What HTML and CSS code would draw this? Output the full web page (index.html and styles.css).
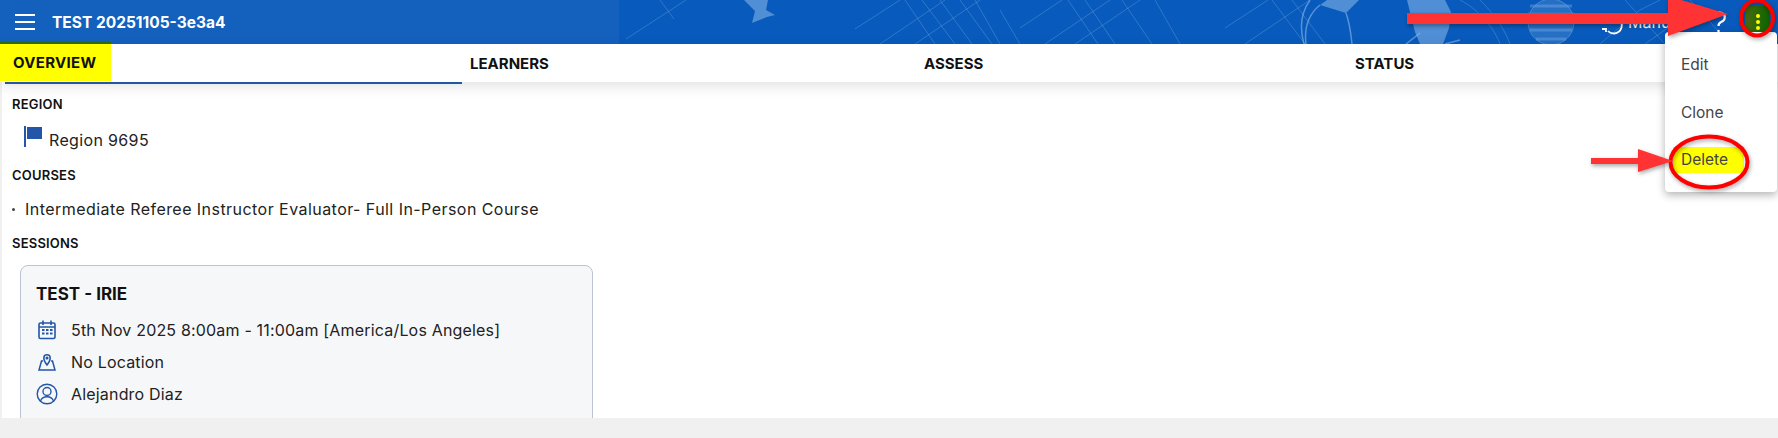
FILE: index.html
```html
<!DOCTYPE html>
<html lang="en">
<head>
	<meta charset="UTF-8">
	<title>TEST 20251105-3e3a4</title>
	<link rel="stylesheet" href="styles.css">
</head>
<body>
	<header class="topbar">
		<div class="topbar-side"></div>
		<svg class="topbar-art" width="1778" height="44" viewBox="0 0 1778 44" fill="none" stroke="#8db8ea">
			<g stroke-opacity="0.3">
				<path d="M626 39L686 0M660 0L674 19" />
				<path d="M855 29L900 0M880 44L945 0M915 44L980 0M905 0L935 44M922 0L955 44M940 0L972 44M960 0L992 44M975 0L1000 44" />
				<path d="M1020 28L1062 0M1045 44L1110 0M1075 44L1140 0M1000 10L1020 44M1068 0L1098 44M1085 0L1115 44M1122 0L1152 44M1155 0L1180 44" />
				<path d="M1225 28L1268 0M1245 44L1310 0M1272 0L1305 44M1292 0L1325 44" />
				<path d="M1460 0C1480 10 1495 30 1500 44M1480 0C1495 15 1505 30 1510 44M1600 44L1640 10L1660 0M1645 44L1700 5M1625 0L1665 44M1690 0L1730 44" />
			</g>
			<g fill="#8db8ea" fill-opacity="0.55" stroke="none">
				<path d="M744 0H768L766 10L775 15L767 17L752 23L755 11Z" />
				<path d="M1320 5L1327 0H1359L1346 13Z" />
				<path d="M1407 0H1445L1451 12L1449 28L1443 44H1420L1415 32Z" />
			</g>
			<g stroke-opacity="0.6" stroke-width="1.5">
				<path d="M1310 0C1300 14 1300 30 1304 44M1320 5C1309 14 1304 28 1306 44M1346 13C1350 24 1351 34 1352 44M1420 33L1406 44M1445 44L1460 40" />
			</g>
			<circle cx="1551" cy="22" r="23" fill="#8db8ea" fill-opacity="0.22" stroke-opacity="0.4" />
			<path d="M1530 6H1572M1528 14H1574M1530 30H1572M1536 39H1566" stroke-width="3" stroke-opacity="0.35" />
		</svg>
		<div class="topbar-left">
			<span class="menu-btn"><i></i><i></i><i></i></span>
			<span class="topbar-title">TEST 20251105-3e3a4</span>
		</div>
		<div class="topbar-right">
			<svg class="refresh-icon" width="26" height="26" viewBox="0 0 26 26" fill="none" stroke="#fff" stroke-width="1.8"><path d="M6 12a8 8 0 0 1 13-5M21 13a8 8 0 0 1-13 9" /><path d="M2 20h4v3" /></svg>
			<span class="topbar-user">Manuel</span>
			<svg class="help-icon" width="22" height="26" viewBox="0 0 22 26" fill="none" stroke="#fff" stroke-width="2.2"><path d="M5 7a6 5 0 1 1 8 6c-2 1-2.5 2-2.5 4" /><circle cx="10.5" cy="22" r="1.3" fill="#fff" stroke="none" /></svg>
			<span class="more-btn"><i></i><i></i><i></i></span>
		</div>
	</header>

	<nav class="tabs">
		<a class="tab tab-active"><mark>OVERVIEW</mark></a>
		<a class="tab">LEARNERS</a>
		<a class="tab">ASSESS</a>
		<a class="tab">STATUS</a>
	</nav>

	<main class="content">
		<h4 class="label">REGION</h4>
		<div class="region">
			<svg width="20" height="22" viewBox="0 0 20 22"><rect x="0" y="0" width="2" height="21" fill="#2456a8" /><rect x="3" y="1" width="15" height="12" fill="#2456a8" /></svg>
			<span>Region 9695</span>
		</div>
		<h4 class="label">COURSES</h4>
		<div class="course"><span class="dot"></span>Intermediate Referee Instructor Evaluator- Full In-Person Course</div>
		<h4 class="label">SESSIONS</h4>
		<section class="session">
			<h3>TEST - IRIE</h3>
			<div class="session-row">
				<svg width="20" height="20" viewBox="0 0 20 20" fill="none" stroke="#2456a8" stroke-width="1.6"><rect x="2" y="3" width="16" height="15.5" rx="1.5" /><path d="M6 0.5V5M14 0.5V5M2 7H18" /><path d="M5 10h2.5M9 10h2.5M13 10h2.5M5 13.5h2.5M9 13.5h2.5M13 13.5h2.5" stroke-width="2.2" /></svg>
				<span>5th Nov 2025 8:00am - 11:00am [America/Los Angeles]</span>
			</div>
			<div class="session-row">
				<svg width="20" height="20" viewBox="0 0 20 20" fill="none" stroke="#2456a8" stroke-width="1.5"><path d="M6 9H4.5L2 18H18L15.5 9H14" /><path d="M10 13C8 10.5 6.8 8.5 6.8 6a3.2 3.2 0 0 1 6.4 0C13.2 8.5 12 10.5 10 13Z" /><circle cx="10" cy="6" r="0.8" /></svg>
				<span>No Location</span>
			</div>
			<div class="session-row">
				<svg width="22" height="22" viewBox="0 0 22 22" fill="none" stroke="#2456a8" stroke-width="1.4"><circle cx="11" cy="11" r="9.8" /><circle cx="11" cy="8.5" r="4" /><path d="M4.5 18c1-3 3.5-4.2 6.5-4.2s5.5 1.2 6.5 4.2" /></svg>
				<span>Alejandro Diaz</span>
			</div>
		</section>
	</main>
	<div class="page-foot"></div>

	<div class="menu">
		<div class="menu-item">Edit</div>
		<div class="menu-item">Clone</div>
		<div class="menu-item"><mark>Delete</mark></div>
	</div>

	<!-- red markup drawn over the screenshot -->
	<svg class="markup" width="1778" height="438" viewBox="0 0 1778 438" fill="none">
		<ellipse cx="1757" cy="18" rx="16" ry="17.5" stroke="#f00" stroke-width="4" />
		<ellipse cx="1709" cy="162" rx="38.5" ry="25.5" stroke="#f00" stroke-width="4" />
		<path d="M1407 13H1668V-4L1728 14L1668 36V24H1407Z" fill="#ff3333" />
		<path d="M1591 158H1638V149L1673 161L1638 172V164H1591Z" fill="#ff3333" />
	</svg>
</body>
</html>
```

FILE: styles.css
```css
*{
	margin: 0;
	padding: 0;
	box-sizing: border-box;
}
html,body{
	height: 100%;
}
body{
	position: relative;
	overflow: hidden;
	background-color: #f0f0f0;
	font-family: Inter, "Liberation Sans", sans-serif;
	color: #111;
}
mark{
	background-color: #ff0;
	color: inherit;
}

.topbar{
	position: relative;
	height: 44px;
	display: flex;
	justify-content: space-between;
	align-items: center;
	background-color: #085bbc;
	overflow: hidden;
}
.topbar-side{
	position: absolute;
	left: 0;
	top: 0;
	width: 619px;
	height: 44px;
	background-color: #1460bd;
}
.topbar-art{
	position: absolute;
	left: 0;
	top: 0;
}
.topbar-left{
	position: relative;
	display: flex;
	align-items: center;
	padding-left: 15px;
}
.menu-btn{
	width: 20px;
	display: flex;
	flex-direction: column;
	gap: 5px;
	margin-right: 17px;
}
.menu-btn i{
	height: 2px;
	background-color: #fff;
}
.topbar-title{
	color: #fff;
	font-size: 15.5px;
	font-weight: 700;
}
.topbar-right{
	position: relative;
	display: flex;
	align-items: center;
	padding-right: 8px;
}
.refresh-icon{
	margin-right: 2px;
}
.topbar-user{
	color: #fff;
	font-size: 16px;
	margin-right: 18px;
	width: 62px;
	overflow: hidden;
}
.help-icon{
	margin-right: 15px;
}
.more-btn{
	width: 25px;
	height: 32px;
	display: flex;
	flex-direction: column;
	justify-content: center;
	align-items: center;
	gap: 2px;
	background: linear-gradient(90deg, #4c6c10, #0c6400);
	border-radius: 5px;
}
.more-btn i{
	width: 4px;
	height: 4px;
	background-color: #ff0;
	border-radius: 50%;
}

.tabs{
	position: relative;
	height: 38px;
	padding-left: 5px;
	display: grid;
	grid-template-columns: 457px 454px 431px 1fr;
	background-color: #fff;
	box-shadow: 0 4px 14px rgba(0,0,0,.12);
	font-size: 15px;
	font-weight: 700;
}
.tab{
	display: flex;
	align-items: center;
	padding-left: 8px;
}
.tab-active{
	position: relative;
}
.tab-active::after{
	content: "";
	position: absolute;
	left: 0;
	right: 0;
	bottom: -2px;
	height: 2px;
	background-color: #2456a8;
}
.tab-active mark{
	position: absolute;
	left: -5px;
	top: -2px;
	width: 111px;
	height: 39px;
	padding-left: 13px;
	line-height: 42px;
	letter-spacing: .3px;
	background: linear-gradient(#2c6a00 2px, #ff0 2px);
}

.content{
	height: 336px;
	margin-left: 2px;
	padding: 14px 10px 0;
	background-color: #fff;
	overflow: hidden;
}
.page-foot{
	height: 20px;
}
.label{
	font-size: 13px;
	font-weight: 600;
	letter-spacing: .2px;
	line-height: 16px;
}
.region{
	height: 22px;
	margin: 17px 0 16px 12px;
	display: flex;
	align-items: center;
	gap: 5px;
	font-size: 16px;
	letter-spacing: .35px;
	color: #222;
}
.region svg{
	margin-bottom: 6px;
}
.course{
	margin: 15px 0;
	height: 22px;
	line-height: 22px;
	font-size: 16px;
	letter-spacing: .45px;
	color: #222;
	display: flex;
	align-items: center;
}
.dot{
	width: 3px;
	height: 3px;
	margin-right: 10px;
	border-radius: 50%;
	background-color: #444;
}
.session{
	width: 573px;
	height: 180px;
	margin: 14px 0 0 8px;
	padding: 18px 15px 0;
	background-color: #f6f7f9;
	border: 1px solid #bcc3d1;
	border-radius: 8px;
}
.session h3{
	font-size: 17px;
	font-weight: 700;
	line-height: 20px;
	margin-bottom: 15px;
}
.session-row{
	height: 22px;
	margin-bottom: 10px;
	display: flex;
	align-items: center;
	gap: 13px;
	font-size: 16px;
	letter-spacing: .18px;
	color: #222;
}
.session-row svg{
	width: 22px;
}

.menu{
	position: absolute;
	left: 1665px;
	top: 32px;
	width: 112px;
	height: 160px;
	background-color: #fff;
	border-radius: 4px;
	box-shadow: 0 3px 8px rgba(0,0,0,.3);
	font-size: 15.5px;
	color: #444;
}
.menu-item{
	height: 48px;
	padding-left: 16px;
	display: flex;
	align-items: center;
}
.menu-item:first-child{
	margin-top: 8px;
}
.menu-item mark{
	width: 71px;
	height: 26px;
	line-height: 26px;
	margin-left: -8px;
	padding-left: 8px;
}

.markup{
	position: absolute;
	left: 0;
	top: 0;
	filter: drop-shadow(1px 2px 2px rgba(0,0,0,.35));
}
```
